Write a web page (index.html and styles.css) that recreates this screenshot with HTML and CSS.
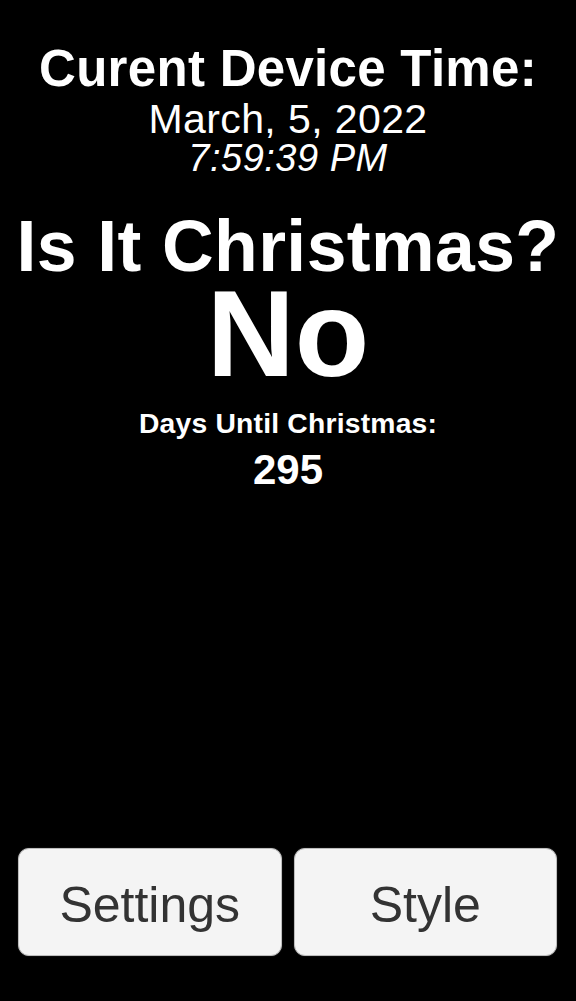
FILE: index.html
```html
<!DOCTYPE html>
<html lang="en">
<head>
<meta charset="utf-8">
<title>Is It Christmas?</title>
<link rel="stylesheet" href="styles.css">
</head>
<body>
<main class="screen">
  <section class="clock">
    <h2 class="clock-title">Curent Device Time:</h2>
    <div class="clock-date">March, 5, 2022</div>
    <div class="clock-time">7:59:39 PM</div>
  </section>
  <section class="answer">
    <h1 class="question">Is It Christmas?</h1>
    <div class="verdict">No</div>
    <div class="days-label">Days Until Christmas:</div>
    <div class="days-count">295</div>
  </section>
  <nav class="actions">
    <button class="action-btn" type="button">Settings</button>
    <button class="action-btn" type="button">Style</button>
  </nav>
</main>
</body>
</html>
```

FILE: styles.css
```css
* { box-sizing: border-box; }
html, body {
  margin: 0;
  padding: 0;
  background: #000;
}
body {
  font-family: "Liberation Sans", Arial, sans-serif;
  color: #fff;
}
.screen {
  height: 1001px;
  display: flex;
  flex-direction: column;
  align-items: stretch;
  padding-top: 41px;
  text-align: center;
}
.clock {
  display: flex;
  flex-direction: column;
}
.clock-title {
  margin: 0;
  font-size: 51px;
  line-height: 56px;
  font-weight: bold;
  letter-spacing: 0.3px;
}
.clock-date {
  margin-top: 2px;
  font-size: 41px;
  line-height: 40px;
  letter-spacing: 0.4px;
}
.clock-time {
  margin-top: 0;
  font-size: 38px;
  line-height: 38px;
  font-style: italic;
  letter-spacing: 0.5px;
}
.answer {
  display: flex;
  flex-direction: column;
  margin-top: 31px;
}
.question {
  margin: 0;
  font-size: 71.5px;
  line-height: 76px;
  font-weight: bold;
  letter-spacing: 0.4px;
}
.verdict {
  font-size: 122px;
  line-height: 98px;
  font-weight: bold;
  margin-top: 1px;
}
.days-label {
  margin-top: 24px;
  font-size: 28.3px;
  line-height: 32px;
  font-weight: bold;
  letter-spacing: 0.2px;
}
.days-count {
  margin-top: 9px;
  font-size: 42px;
  line-height: 44px;
  font-weight: bold;
}
.actions {
  margin-top: auto;
  margin-bottom: 45px;
  display: flex;
  gap: 12px;
  padding: 0 19px 0 18px;
}
.action-btn {
  flex: 1;
  height: 108px;
  display: flex;
  align-items: center;
  justify-content: center;
  padding: 6px 0 0;
  background: #f4f4f4;
  border: 1px solid #bdbdbd;
  border-radius: 11px;
  box-shadow: 0 0 1px rgba(255, 255, 255, 0.4);
  font-family: "Liberation Sans", Arial, sans-serif;
  font-size: 50px;
  color: #333;
  line-height: 56px;
}
```
